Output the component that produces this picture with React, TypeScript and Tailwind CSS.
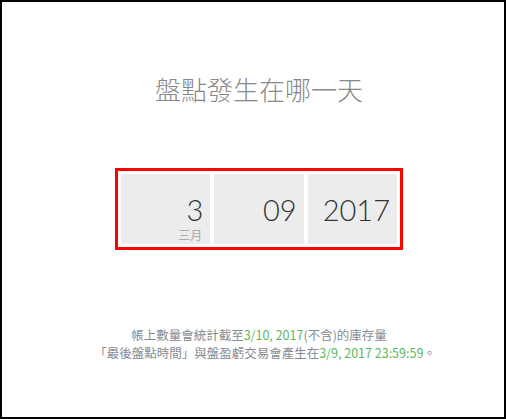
import React from "react";

const cjk = "font-['Noto_Sans_CJK_TC','Noto_Sans',sans-serif]";

const Cell: React.FC<{ value: string; label?: string }> = ({ value, label }) => (
	<div className="flex-1 bg-[#ececec] flex flex-col items-end pr-[7px] pt-[22px]">
		<div className="font-['Lato','Open_Sans',sans-serif] font-light text-[29px] leading-[28px] text-[#333]">
			{value}
		</div>
		{label && (
			<div className={`${cjk} text-[12px] leading-[14px] text-[#aaa] mt-[4px] mr-[1px]`}>
				{label}
			</div>
		)}
	</div>
);

export default function App() {
	return (
		<div className="w-[506px] h-[419px] border-2 border-black bg-white overflow-hidden">
			<div className="flex flex-col items-center pl-[12px]">
				<div className={`${cjk} font-light text-[26px] leading-[26px] text-[#888] mt-[74px]`}>
					盤點發生在哪一天
				</div>

				<div className="mt-[66px] w-[288px] h-[82px] border-[3px] border-[#ff0000] p-[3px] flex gap-1">
					<Cell value="3" label="三月" />
					<Cell value="09" />
					<Cell value="2017" />
				</div>

				<div className={`${cjk} mt-[76px] text-[12.5px] leading-[18px] text-[#858c93] text-center`}>
					<div>
						帳上數量會統計截至<span className="text-[#5cb85c]">3/10, 2017</span>(不含)的庫存量
					</div>
					<div className="pl-[12px]">
						「最後盤點時間」與盤盈虧交易會產生在<span className="text-[#5cb85c]">3/9, 2017 23:59:59</span>。
					</div>
				</div>
			</div>
		</div>
	);
}
